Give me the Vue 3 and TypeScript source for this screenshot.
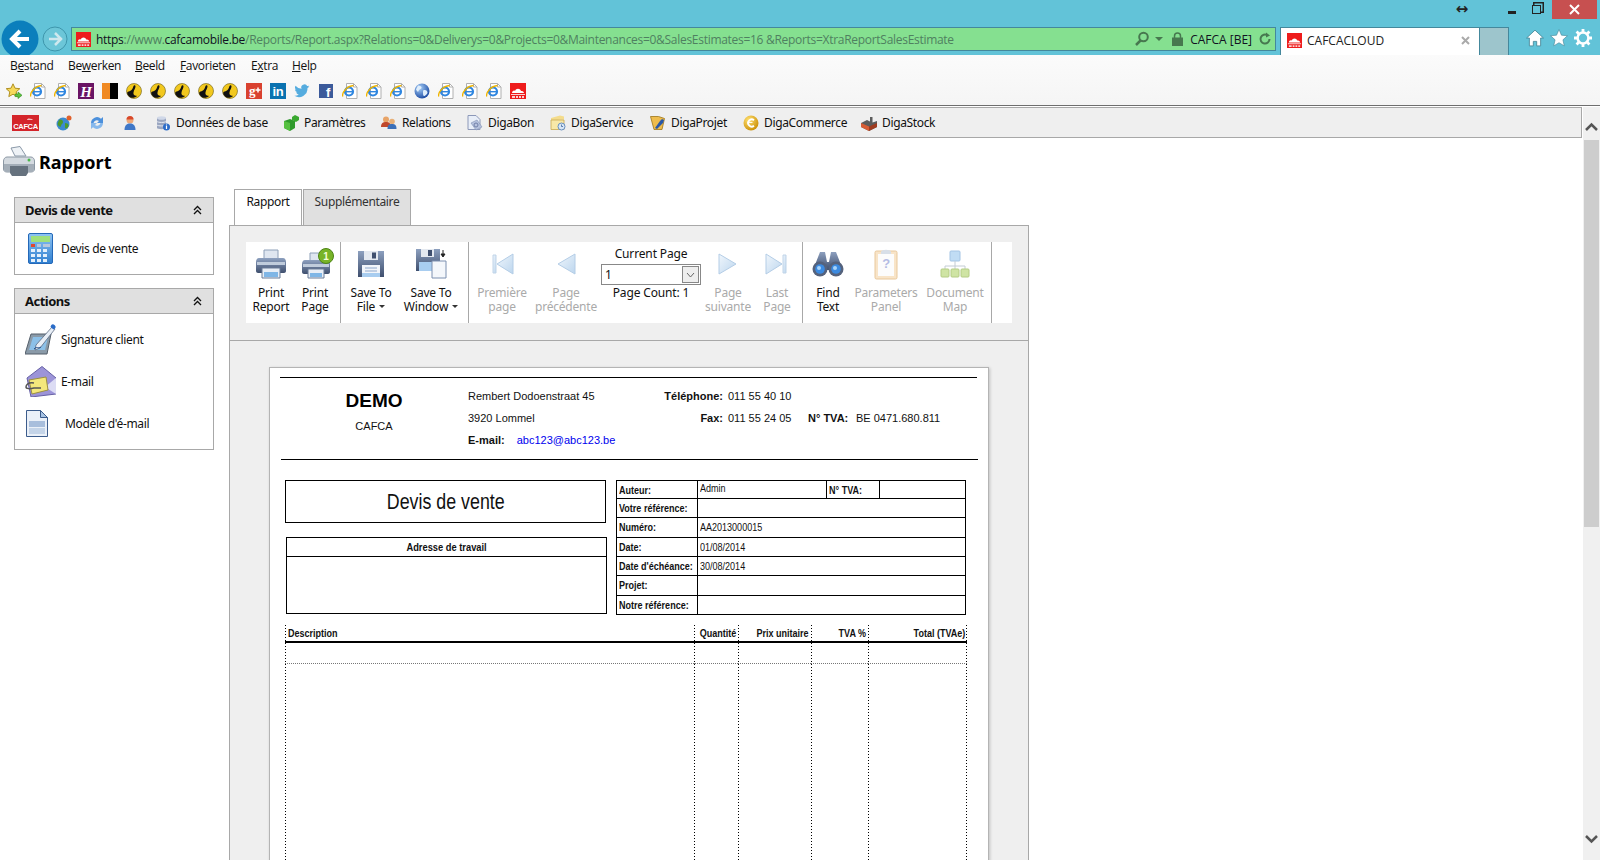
<script setup lang="ts">
// IE11 window with the Cafca report viewer inside it.
interface MenuItem { a: string; u: string; b: string; w: number }
interface NavItem { icon: string; label: string; w: number }
interface ToolButton { icon: string; lines: string[]; w: number; off?: boolean; caret?: boolean }
interface Glyph { t: string; x: number; y: number; size: number; family: string; color?: string; italic?: boolean }

const menus: MenuItem[] = [
  { a: "B", u: "e", b: "stand", w: 58 },
  { a: "Be", u: "w", b: "erken", w: 67 },
  { a: "", u: "B", b: "eeld", w: 45 },
  { a: "", u: "F", b: "avorieten", w: 71 },
  { a: "E", u: "x", b: "tra", w: 41 },
  { a: "", u: "H", b: "elp", w: 40 },
];

const favs = [
  "fav-star", "fav-ie", "fav-ie", "fav-h", "fav-flag", "fav-tt", "fav-tt", "fav-tt", "fav-tt", "fav-tt",
  "fav-gp", "fav-in", "fav-tw", "fav-fb", "fav-ie", "fav-ie", "fav-ie", "fav-globe", "fav-ie", "fav-ie",
  "fav-ie", "fav-cafca",
];

// letters on top of an icon stay real text, so they sit at the use site and not in the sprite
const glyphs: Record<string, Glyph> = {
  "fav-h": { t: "H", x: 8, y: 13.5, size: 15, family: "Liberation Serif", italic: true },
  "fav-gp": { t: "g", x: 6, y: 12, size: 13, family: "Liberation Serif" },
  "fav-in": { t: "in", x: 8, y: 13, size: 13, family: "Liberation Sans" },
  "fav-fb": { t: "f", x: 10, y: 14, size: 13, family: "Liberation Sans" },
  "bg-printone": { t: "1", x: 24, y: 11.5, size: 10, family: "Liberation Sans", color: "#f4ffd8" },
  "bg-param": { t: "?", x: 16, y: 20, size: 13, family: "Liberation Sans", color: "#b4bce4" },
};

const navItems: NavItem[] = [
  { icon: "nav-db", label: "Données de base", w: 128 },
  { icon: "nav-cube", label: "Paramètres", w: 98 },
  { icon: "nav-people", label: "Relations", w: 86 },
  { icon: "nav-doc", label: "DigaBon", w: 83 },
  { icon: "nav-folder", label: "DigaService", w: 100 },
  { icon: "nav-proj", label: "DigaProjet", w: 93 },
  { icon: "nav-coin", label: "DigaCommerce", w: 118 },
  { icon: "nav-stock", label: "DigaStock", w: 90 },
];

const groupA: ToolButton[] = [
  { icon: "bg-print", lines: ["Print", "Report"], w: 46 },
  { icon: "bg-printone", lines: ["Print", "Page"], w: 42 },
];
const groupB: ToolButton[] = [
  { icon: "bg-save", lines: ["Save To", "File"], w: 60, caret: true },
  { icon: "bg-savewin", lines: ["Save To", "Window"], w: 60, caret: true },
];
const groupC1: ToolButton[] = [
  { icon: "bg-first", lines: ["Première", "page"], w: 66, off: true },
  { icon: "bg-prev", lines: ["Page", "précédente"], w: 62, off: true },
];
const groupC2: ToolButton[] = [
  { icon: "bg-next", lines: ["Page", "suivante"], w: 46, off: true },
  { icon: "bg-last", lines: ["Last", "Page"], w: 52, off: true },
];
const groupD: ToolButton[] = [
  { icon: "bg-find", lines: ["Find", "Text"], w: 50 },
  { icon: "bg-param", lines: ["Parameters", "Panel"], w: 66, off: true },
  { icon: "bg-map", lines: ["Document", "Map"], w: 72, off: true },
];

const metaRows = [
  { label: "Votre référence:", value: "" },
  { label: "Numéro:", value: "AA2013000015" },
  { label: "Date:", value: "01/08/2014" },
  { label: "Date d'échéance:", value: "30/08/2014" },
  { label: "Projet:", value: "" },
  { label: "Notre référence:", value: "" },
];

const lineHead = ["Description", "Quantité", "Prix unitaire", "TVA %", "Total (TVAe)"];
</script>

<template>
  <div class="window">
    <!-- icon sprite, referenced through <use> below -->
    <svg class="sprite" width="0" height="0" aria-hidden="true">
      <defs>
        <linearGradient id="g-blue" x1="0" y1="0" x2="0" y2="1"><stop offset="0" stop-color="#8fc4f2" /><stop offset="1" stop-color="#2f7fd0" /></linearGradient>
        <linearGradient id="g-steel" x1="0" y1="0" x2="0" y2="1"><stop offset="0" stop-color="#8da0bf" /><stop offset="1" stop-color="#3f4f6e" /></linearGradient>
        <linearGradient id="g-pale" x1="0" y1="0" x2="1" y2="1"><stop offset="0" stop-color="#f0f6fc" /><stop offset="1" stop-color="#bcd6ee" /></linearGradient>
        <radialGradient id="g-globe" cx=".35" cy=".3" r=".8"><stop offset="0" stop-color="#a8d0f8" /><stop offset="1" stop-color="#0f3f9c" /></radialGradient>
        <radialGradient id="g-gold" cx=".35" cy=".3" r=".8"><stop offset="0" stop-color="#ffe070" /><stop offset="1" stop-color="#c88a00" /></radialGradient>
      </defs>

      <symbol id="fav-cafca" viewBox="0 0 16 16">
        <rect width="16" height="16" fill="#ee1c1c" />
        <path d="M2 10c0-2 2-3 3-2 1-3 5-3 6 0 2-.5 3 1 3 2z" fill="#fff" />
        <path d="M1 11h14v1H1zM2 13h3v2H2zM6 13h2v2H6zM9 13h2v2H9zM12 13h2v2h-2z" fill="#fff" opacity=".8" />
      </symbol>
      <symbol id="fav-ie" viewBox="0 0 16 16">
        <path d="M4.500 .5h7l3.500 3.500v11.500h-10.500z" fill="#fff" stroke="#b0b0b0" />
        <path d="M11.500 .5v3.500h3.500" fill="none" stroke="#b0b0b0" />
        <circle cx="7" cy="8.500" r="4" fill="none" stroke="#2f86e0" stroke-width="2.200" />
        <path d="M4 8.700h6.500" stroke="#2f86e0" stroke-width="1.400" />
        <path d="M.8 13.500C-.4 9.500 5 3 11.500 2.500" fill="none" stroke="#efb400" stroke-width="1.300" />
      </symbol>
      <symbol id="fav-star" viewBox="0 0 16 16">
        <path d="M7 .8l2 4.400 4.800.5-3.600 3.200 1 4.700L7 11.200l-4.200 2.400 1-4.700L.2 5.700 5 5.200z" fill="#f6d95a" stroke="#b09020" />
        <path d="M9 11h3V9l4 3.300-4 3.300v-2H9z" fill="#5cc03c" stroke="#2f8a20" stroke-width=".6" />
      </symbol>
      <symbol id="fav-h" viewBox="0 0 16 16"><rect width="16" height="16" fill="#6a1464" /></symbol>
      <symbol id="fav-flag" viewBox="0 0 16 16">
        <rect width="8" height="16" fill="#f08a24" /><rect x="8" width="8" height="16" fill="#000" />
      </symbol>
      <symbol id="fav-tt" viewBox="0 0 16 16">
        <circle cx="8" cy="8" r="7.500" fill="#f2c81e" stroke="#6a5a10" stroke-width=".6" />
        <path d="M1.500 9c3-1 5-2 6-6 .5-1 2-1 2 .5 0 2-1.500 3-2 6s2 3 3.500 3.500c-2 2-6 2.500-8 .5S1 10 1.500 9z" fill="#111" />
      </symbol>
      <symbol id="fav-gp" viewBox="0 0 16 16">
        <rect width="16" height="16" fill="#d9412f" />
        <path d="M12 4.500v5M9.500 7h5" stroke="#fff" stroke-width="1.500" />
      </symbol>
      <symbol id="fav-in" viewBox="0 0 16 16"><rect width="16" height="16" fill="#0a72b0" /></symbol>
      <symbol id="fav-tw" viewBox="0 0 16 16">
        <path d="M15.500 3.600c-.5.2-1.100.4-1.700.4.600-.4 1.100-.9 1.300-1.600-.6.3-1.200.6-1.900.7A3 3 0 0 0 7.600 5.800 8.500 8.500 0 0 1 1.500 2.700a3 3 0 0 0 .9 4c-.5 0-1-.1-1.400-.4 0 1.500 1 2.700 2.400 3-.4.1-.9.1-1.400 0 .4 1.200 1.500 2.100 2.800 2.100A6 6 0 0 1 .4 12.700 8.500 8.500 0 0 0 13.500 5.100c.8-.4 1.500-.9 2-1.500z" fill="#55acdf" />
      </symbol>
      <symbol id="fav-fb" viewBox="0 0 16 16"><rect x="1" y="1" width="14" height="14" fill="#3b5a9a" /></symbol>
      <symbol id="fav-globe" viewBox="0 0 16 16">
        <circle cx="8" cy="8" r="7.500" fill="url(#g-globe)" />
        <path d="M4 2.500c2 0 4 1 3.500 2.500S5 6 4.500 8 3 8 2 6.500zM10 7c2-.5 3.500 1 3.500 2.500S11 13 10 13s-1-3-1-4 0-2 1-2z" fill="#dfeefc" />
      </symbol>

      <symbol id="nav-logo" viewBox="0 0 27 16">
        <rect width="27" height="16" fill="#d4242a" />
        <path d="M15 5c0-1 1-1.500 2-1.500S19 4 20 4s1 1 0 1z" fill="#fff" opacity=".7" />
      </symbol>
      <symbol id="nav-globe" viewBox="0 0 16 16">
        <circle cx="7" cy="9" r="6.500" fill="#3c8ad0" />
        <path d="M3 5c2-1 4 0 4 2s-2 2-2 4-3 0-3.500-2zM9 8c2 0 4 1 3.500 3S10 14 9 13z" fill="#4c9a2c" />
        <circle cx="13" cy="3" r="2.500" fill="#e0602c" />
      </symbol>
      <symbol id="nav-refresh" viewBox="0 0 16 16">
        <path d="M2 8a6 6 0 0 1 10-4.300L14 2v6H8l2-2a3.500 3.500 0 0 0-5.500 2z" fill="#4c90dc" />
        <path d="M14 8a6 6 0 0 1-10 4.300L2 14V8h6l-2 2a3.500 3.500 0 0 0 5.500-2z" fill="#86b8ec" />
      </symbol>
      <symbol id="nav-user" viewBox="0 0 16 16">
        <circle cx="8" cy="5" r="3.500" fill="#eea878" />
        <path d="M4.500 4.500a3.500 3.500 0 0 1 7 0z" fill="#d8482a" />
        <path d="M2.500 15c0-5 2.500-6.500 5.500-6.500s5.500 1.500 5.500 6.500z" fill="#3f78c8" />
      </symbol>
      <symbol id="nav-db" viewBox="0 0 16 16">
        <path d="M2 3v10c0 1.500 9 1.500 9 0V3z" fill="#9aa6c0" />
        <ellipse cx="6.500" cy="3" rx="4.500" ry="1.800" fill="#d0d8e8" />
        <path d="M2 6.500c1 1.200 8 1.200 9 0M2 10c1 1.200 8 1.200 9 0" fill="none" stroke="#e8ecf4" />
        <circle cx="11.500" cy="12" r="3.500" fill="#2c6cc8" />
        <path d="M11.500 11v3M11.500 9.500v1" stroke="#fff" stroke-width="1.200" />
      </symbol>
      <symbol id="nav-cube" viewBox="0 0 16 16">
        <path d="M1 6l6-2 5 2v7l-5 3-6-3z" fill="#2f9a2c" />
        <path d="M1 6l6 2v8l-6-3z" fill="#56c040" />
        <path d="M9 2l3-2 4 2v3l-3 2-4-2z" fill="#3aa830" />
      </symbol>
      <symbol id="nav-people" viewBox="0 0 16 16">
        <circle cx="5" cy="4.500" r="3" fill="#e8a468" />
        <path d="M0 12c0-4 2-5 5-5s5 1 5 5z" fill="#c0482c" />
        <circle cx="11" cy="6.500" r="2.800" fill="#e8b078" />
        <path d="M6.500 14c0-4 1.500-5 4.500-5s4.500 1 4.500 5z" fill="#3c70b8" />
      </symbol>
      <symbol id="nav-doc" viewBox="0 0 16 16">
        <path d="M1 .5h8l4 4v10H1z" fill="#e8eef8" stroke="#8c98b8" />
        <path d="M4 8l6-3 5 7-6 3z" fill="#b6c2de" stroke="#8090b4" stroke-width=".6" />
        <circle cx="9" cy="10" r="2" fill="none" stroke="#7080a8" />
      </symbol>
      <symbol id="nav-folder" viewBox="0 0 16 16">
        <path d="M1 3l9-2.500 4 1v3l-13 1z" fill="#f4dc8c" />
        <path d="M1 5h13v9.500H1z" fill="#f8e8a8" stroke="#c8a850" stroke-width=".8" />
        <circle cx="11.500" cy="11.500" r="3.500" fill="#d8e6f6" stroke="#6890c0" />
        <path d="M11.500 9.500v2h1.500" fill="none" stroke="#40689c" stroke-width=".8" />
      </symbol>
      <symbol id="nav-proj" viewBox="0 0 16 16">
        <path d="M.5 1.500h8l6 2-2.500 11H4z" fill="#eebc4c" stroke="#9c7418" stroke-width=".8" />
        <path d="M5 13l5-7 2-2 2 1-1 3-6 6z" fill="#2858a8" />
      </symbol>
      <symbol id="nav-coin" viewBox="0 0 16 16">
        <circle cx="8" cy="8" r="7.500" fill="url(#g-gold)" />
        <path d="M11 5.200A3.600 3.600 0 1 0 11 10.800" fill="none" stroke="#fff" stroke-width="1.800" />
        <path d="M4.500 7.400h5" stroke="#fff" stroke-width="1" />
      </symbol>
      <symbol id="nav-stock" viewBox="0 0 16 16">
        <path d="M0 8l6-3 3 1.500V2h2.500v5.500L16 6v6l-8 4-8-4z" fill="#5c5c5c" />
        <path d="M0 8l8 3.500V16l-8-4z" fill="#d85c34" />
        <path d="M8 11.500L16 8v4l-8 4z" fill="#a03c20" />
      </symbol>

      <symbol id="nav-printer" viewBox="0 0 32 32">
        <path d="M8 2l9-1.500 6 9.500H12z" fill="#eef2f6" stroke="#8a98a8" />
        <path d="M4 11h24c2 0 3.500 2 3.500 4v8c0 2-1.500 3-3.500 3H4c-2 0-3.500-1-3.500-3v-8c0-2 1.500-4 3.500-4z" fill="#d4dae0" stroke="#8c98a4" />
        <path d="M1 18h30v5c0 2-1 3-3 3H4c-2 0-3-1-3-3z" fill="#a4aeb8" />
        <path d="M7 20h18v7l-2 3H9l-2-3z" fill="#66727e" />
        <circle cx="26" cy="14" r="1.500" fill="#48b848" />
      </symbol>
      <symbol id="side-calc" viewBox="0 0 25 31">
        <rect x=".5" y=".5" width="24" height="30" rx="1.500" fill="url(#g-blue)" stroke="#2468b8" />
        <rect x="3" y="3" width="19" height="6" fill="#9fe07c" />
        <rect x="3" y="11" width="4" height="3" fill="#e04830" /><rect x="9" y="11" width="4" height="3" fill="#b8c8dc" /><rect x="15" y="11" width="7" height="3" fill="#b8c8dc" />
        <path d="M3 16h4v3H3zM9 16h4v3H9zM15 16h4v3h-4zM3 21h4v3H3zM9 21h4v3H9zM15 21h4v3h-4zM3 26h4v3H3zM9 26h4v3H9zM15 26h4v3h-4z" fill="#e4f0fb" />
      </symbol>
      <symbol id="side-sign" viewBox="0 0 31 31">
        <path d="M6 10h20l-4 20H0z" fill="#8a9aa8" stroke="#555f6a" />
        <path d="M8 13h15l-3 13H4z" fill="#8cc0e8" />
        <path d="M11 21L27 3l3 2-15 19-5 2z" fill="#e8eef6" stroke="#5a6a80" stroke-width=".8" />
        <path d="M26 1.500a2.500 2.500 0 0 1 4 3l-1.500 1-3-2.500z" fill="#2a6cc8" />
        <path d="M9 25c3-3 4 0 7-2" fill="none" stroke="#24508c" />
      </symbol>
      <symbol id="side-mail" viewBox="0 0 31 31">
        <path d="M2 12L17 .5 31 12v16L6 31z" fill="#9c94d8" stroke="#6660a4" />
        <path d="M31 12L20 21l11 7z" fill="#dcdcf4" />
        <path d="M4 14l17-3 2 13-16 4z" fill="#f4e87c" stroke="#9c9040" />
        <path d="M9 17c-6-1-8 2-8 4s4 2 8 1h7" fill="none" stroke="#555" stroke-width="1.500" />
      </symbol>
      <symbol id="side-page" viewBox="0 0 22 27">
        <path d="M.5.500h14l7 7v19H.5z" fill="#eaf0f8" stroke="#3c5c8c" />
        <path d="M14.500.500v7h7z" fill="#a8c4e4" stroke="#3c5c8c" />
        <path d="M3 11h16v6H3z" fill="#a8bedc" /><path d="M3 18h16v6H3z" fill="#c4d4e8" />
      </symbol>

      <symbol id="bg-print" viewBox="0 0 32 32">
        <path d="M9 2h14v9H9z" fill="#dfe6f0" stroke="#8ea0b8" />
        <path d="M4 10h24c2 0 3 2 3 4v9c0 1-1 2-2 2H3c-1 0-2-1-2-2v-9c0-2 1-4 3-4z" fill="url(#g-steel)" />
        <path d="M2 14h28v3H2z" fill="#c0ccdc" />
        <path d="M7 20h18v10H7z" fill="#e8eef6" stroke="#6a7c98" />
        <path d="M9 24h14v5H9z" fill="#7fb6e6" />
      </symbol>
      <symbol id="bg-printone" viewBox="0 0 32 32">
        <path d="M8 5h13v8H8z" fill="#dfe6f0" stroke="#8ea0b8" />
        <path d="M3 12h22c2 0 3 2 3 4v8c0 1-1 2-2 2H2c-1 0-2-1-2-2v-8c0-2 1-4 3-4z" fill="url(#g-steel)" />
        <path d="M1 16h26v3H1z" fill="#c0ccdc" />
        <path d="M6 21h16v9H6z" fill="#e8eef6" stroke="#6a7c98" />
        <path d="M8 25h12v4H8z" fill="#7fb6e6" />
        <circle cx="24" cy="8" r="7.500" fill="#78b428" stroke="#4c8414" />
      </symbol>
      <symbol id="bg-save" viewBox="0 0 32 32">
        <path d="M3 3h26v26H3z" fill="url(#g-steel)" />
        <path d="M9 3h14v9H9z" fill="#e4e9f0" /><path d="M17 4.500h4v6h-4z" fill="#3f4f6e" />
        <path d="M7 17h18v12H7z" fill="#f2f5fa" />
        <path d="M10 20h12M10 23h12" stroke="#8ea8cc" />
        <path d="M7 25h18v4H7z" fill="#a8cdf0" />
      </symbol>
      <symbol id="bg-savewin" viewBox="0 0 32 32">
        <path d="M1 1h24v22H1z" fill="url(#g-steel)" />
        <path d="M6 1h13v8H6z" fill="#e4e9f0" /><path d="M13 2h4v6h-4z" fill="#3f4f6e" />
        <path d="M4 14h14v9H4z" fill="#a8cdf0" />
        <path d="M17 13h14v17H17z" fill="#f4f7fb" stroke="#7c90b0" />
        <path d="M28 2v6M26 6l2 3 2-3z" stroke="#222" fill="#222" />
      </symbol>
      <symbol id="bg-first" viewBox="0 0 32 32"><path d="M7 7h3v18H7z" fill="url(#g-pale)" stroke="#c0d4e8" /><path d="M27 6v20L11 16z" fill="url(#g-pale)" stroke="#b4cde6" /></symbol>
      <symbol id="bg-prev" viewBox="0 0 32 32"><path d="M25 6v20L8 16z" fill="url(#g-pale)" stroke="#b4cde6" /></symbol>
      <symbol id="bg-next" viewBox="0 0 32 32"><path d="M7 6v20l17-10z" fill="url(#g-pale)" stroke="#b4cde6" /></symbol>
      <symbol id="bg-last" viewBox="0 0 32 32"><path d="M5 6v20l16-10z" fill="url(#g-pale)" stroke="#b4cde6" /><path d="M22 7h3v18h-3z" fill="url(#g-pale)" stroke="#c0d4e8" /></symbol>
      <symbol id="bg-find" viewBox="0 0 32 32">
        <path d="M8 4h5l2 10h2l2-10h5l7 18H1z" fill="url(#g-steel)" />
        <circle cx="8" cy="21" r="7.500" fill="#55627c" /><circle cx="24" cy="21" r="7.500" fill="#55627c" />
        <circle cx="8" cy="21" r="4.800" fill="#3c8ae0" /><circle cx="24" cy="21" r="4.800" fill="#3c8ae0" />
        <circle cx="7" cy="20" r="2" fill="#a8d4fa" /><circle cx="23" cy="20" r="2" fill="#a8d4fa" />
      </symbol>
      <symbol id="bg-param" viewBox="0 0 32 32">
        <rect x="5" y="3" width="22" height="28" rx="1.500" fill="#f8e4c8" stroke="#e8c89c" />
        <rect x="8" y="6" width="16" height="22" fill="#fcfcfc" />
        <path d="M11 4c0-3 10-3 10 0v2H11z" fill="#d8dfe8" />
      </symbol>
      <symbol id="bg-map" viewBox="0 0 32 32">
        <rect x="11" y="3" width="10" height="10" rx="1" fill="#c0dcf4" stroke="#a4c4e4" />
        <path d="M16 13v5M6 22v-4h20v4M16 18v4" fill="none" stroke="#c4ccd4" />
        <rect x="2" y="21" width="8" height="8" rx="1" fill="#cfe4a4" stroke="#b4cc84" />
        <rect x="12" y="21" width="8" height="8" rx="1" fill="#cfe4a4" stroke="#b4cc84" />
        <rect x="22" y="21" width="8" height="8" rx="1" fill="#cfe4a4" stroke="#b4cc84" />
      </symbol>
    </svg>

    <header class="chrome">
      <div class="win-row">
        <span class="resize">↔</span>
        <button class="win-btn"><span class="win-min" /></button>
        <button class="win-btn"><span class="win-restore" /></button>
        <button class="win-close">
          <svg width="11" height="11" viewBox="0 0 11 11"><path d="M1 1l9 9M10 1l-9 9" stroke="#fff" stroke-width="2" /></svg>
        </button>
      </div>
      <div class="nav-row">
        <svg class="back" width="38" height="38" viewBox="0 0 38 38">
          <circle cx="19" cy="19" r="18.500" fill="#0b7fbc" />
          <path d="M28 19H12M19 11l-8 8 8 8" fill="none" stroke="#fff" stroke-width="4" />
        </svg>
        <svg class="forward" width="26" height="26" viewBox="0 0 26 26">
          <circle cx="13" cy="13" r="12" fill="#6cc6d8" stroke="#3e96ac" />
          <path d="M20 13H7M13 7l6 6-6 6" fill="none" stroke="#cfe8ee" stroke-width="2.500" />
        </svg>
        <div class="address">
          <svg class="addr-fav" width="15" height="15"><use href="#fav-cafca" /></svg>
          <span class="url"><b>https</b>://www.<b>cafcamobile.be</b>/Reports/Report.aspx?Relations=0&amp;Deliverys=0&amp;Projects=0&amp;Maintenances=0&amp;SalesEstimates=16 &amp;Reports=XtraReportSalesEstimate</span>
          <svg width="16" height="16" viewBox="0 0 16 16"><circle cx="9.500" cy="6" r="4.300" fill="none" stroke="#47784f" stroke-width="2" /><path d="M6.500 9.500L2 14" stroke="#47784f" stroke-width="2.500" /></svg>
          <span class="addr-caret" />
          <svg class="addr-lock" width="11" height="14" viewBox="0 0 11 14"><path d="M2.500 6V4a3 3 0 0 1 6 0v2" fill="none" stroke="#47784f" stroke-width="1.500" /><rect y="5.500" width="11" height="8.500" fill="#47784f" /></svg>
          <span class="cert">CAFCA [BE]</span>
          <svg class="addr-reload" width="14" height="14" viewBox="0 0 14 14"><path d="M11.500 7a4.500 4.500 0 1 1-2-3.700" fill="none" stroke="#47784f" stroke-width="2" /><path d="M8 .5l4 3-4 2z" fill="#47784f" /></svg>
        </div>
        <div class="tab">
          <svg width="15" height="15"><use href="#fav-cafca" /></svg>
          <span class="tab-title">CAFCACLOUD</span>
          <svg width="9" height="9" viewBox="0 0 9 9"><path d="M1 1l7 7M8 1L1 8" stroke="#aaa" stroke-width="2" /></svg>
        </div>
        <div class="new-tab" />
        <div class="chrome-icons">
          <svg width="18" height="18" viewBox="0 0 16 16"><path d="M8 1L.5 8H3v7h3.500v-4h3v4H13V8h2.500z" fill="#fff" stroke="#3d7f90" stroke-width=".7" /></svg>
          <svg width="18" height="18" viewBox="0 0 16 16"><path d="M8 .5l2.200 5 5.300.5-4 3.600 1.200 5.400L8 12.200 3.300 15l1.200-5.400-4-3.600 5.300-.5z" fill="#fff" stroke="#3d7f90" stroke-width=".5" /></svg>
          <svg width="18" height="18" viewBox="0 0 16 16"><circle cx="8" cy="8" r="4.800" fill="none" stroke="#fff" stroke-width="2.200" /><path d="M8 0v3M8 13v3M0 8h3M13 8h3M2.300 2.300l2.100 2.100M11.600 11.600l2.100 2.100M13.700 2.300l-2.100 2.100M4.400 11.600l-2.100 2.100" stroke="#fff" stroke-width="2.500" /></svg>
        </div>
      </div>
    </header>

    <div class="menu-area">
      <nav class="menu">
        <span v-for="m in menus" :key="m.b" class="menu-item" :style="{ width: m.w + 'px' }">{{ m.a }}<u>{{ m.u }}</u>{{ m.b }}</span>
      </nav>
      <div class="favs">
        <svg v-for="(f, i) in favs" :key="i" width="16" height="16" viewBox="0 0 16 16">
          <use :href="'#' + f" width="16" height="16" />
          <text
            v-if="glyphs[f]"
            :x="glyphs[f].x"
            :y="glyphs[f].y"
            text-anchor="middle"
            font-weight="700"
            fill="#fff"
            :font-family="glyphs[f].family"
            :font-size="glyphs[f].size"
            :font-style="glyphs[f].italic ? 'italic' : 'normal'"
          >{{ glyphs[f].t }}</text>
        </svg>
      </div>
    </div>

    <div class="site">
      <div class="viewport">
        <div class="app-bar">
          <svg class="logo" width="27" height="16" viewBox="0 0 27 16">
            <use href="#nav-logo" width="27" height="16" />
            <text x="13.500" y="13.500" text-anchor="middle" font-family="Liberation Sans" font-size="7.500" font-weight="700" fill="#fff">CAFCA</text>
          </svg>
          <svg class="bar-i first" width="16" height="16"><use href="#nav-globe" /></svg>
          <svg class="bar-i" width="16" height="16"><use href="#nav-refresh" /></svg>
          <svg class="bar-i" width="16" height="16"><use href="#nav-user" /></svg>
          <span v-for="n in navItems" :key="n.label" class="bar-item" :style="{ width: n.w + 'px' }">
            <svg width="16" height="16"><use :href="'#' + n.icon" /></svg>
            {{ n.label }}
          </span>
        </div>

        <div class="page-title">
          <svg width="32" height="32"><use href="#nav-printer" /></svg>
          <h1>Rapport</h1>
        </div>

        <div class="content">
          <aside class="sidebar">
            <section class="side-panel">
              <h2>Devis de vente
                <svg width="9" height="10" viewBox="0 0 9 10"><path d="M1 5l3.500-3.500L8 5M1 9l3.500-3.500L8 9" fill="none" stroke="#111" stroke-width="1.300" /></svg>
              </h2>
              <div class="side-body one">
                <div class="side-row">
                  <svg class="calc" width="25" height="31"><use href="#side-calc" /></svg>
                  <span>Devis de vente</span>
                </div>
              </div>
            </section>
            <section class="side-panel">
              <h2>Actions
                <svg width="9" height="10" viewBox="0 0 9 10"><path d="M1 5l3.500-3.500L8 5M1 9l3.500-3.500L8 9" fill="none" stroke="#111" stroke-width="1.300" /></svg>
              </h2>
              <div class="side-body">
                <div class="side-row">
                  <svg class="act" width="31" height="31"><use href="#side-sign" /></svg>
                  <span>Signature client</span>
                </div>
                <div class="side-row">
                  <svg class="act" width="31" height="31"><use href="#side-mail" /></svg>
                  <span>E-mail</span>
                </div>
                <div class="side-row">
                  <svg class="pg" width="22" height="27"><use href="#side-page" /></svg>
                  <span>Modèle d'é-mail</span>
                </div>
              </div>
            </section>
          </aside>

          <main class="main">
            <div class="tabs">
              <div class="r-tab active">Rapport</div>
              <div class="r-tab other">Supplémentaire</div>
            </div>
            <div class="tool-panel">
              <div class="ribbon">
                <div class="group g1">
                  <div v-for="b in groupA" :key="b.icon" class="tool" :style="{ width: b.w + 'px' }">
                    <svg width="32" height="32" viewBox="0 0 32 32">
                      <use :href="'#' + b.icon" width="32" height="32" />
                      <text v-if="glyphs[b.icon]" :x="glyphs[b.icon].x" :y="glyphs[b.icon].y" text-anchor="middle" font-weight="700" :fill="glyphs[b.icon].color" :font-family="glyphs[b.icon].family" :font-size="glyphs[b.icon].size">{{ glyphs[b.icon].t }}</text>
                    </svg>
                    <span v-for="l in b.lines" :key="l">{{ l }}</span>
                  </div>
                </div>
                <div class="group g2">
                  <div v-for="b in groupB" :key="b.icon" class="tool" :style="{ width: b.w + 'px' }">
                    <svg width="32" height="32"><use :href="'#' + b.icon" /></svg>
                    <span>{{ b.lines[0] }}</span>
                    <span>{{ b.lines[1] }}<i class="caret" /></span>
                  </div>
                </div>
                <div class="group g3">
                  <div v-for="b in groupC1" :key="b.icon" class="tool off" :style="{ width: b.w + 'px' }">
                    <svg width="32" height="32"><use :href="'#' + b.icon" /></svg>
                    <span v-for="l in b.lines" :key="l">{{ l }}</span>
                  </div>
                  <div class="pager">
                    <span class="pager-label">Current Page</span>
                    <div class="combo">
                      <span>1</span>
                      <span class="combo-btn">
                        <svg width="9" height="6" viewBox="0 0 9 6"><path d="M1 1l3.500 4L8 1" fill="none" stroke="#666" /></svg>
                      </span>
                    </div>
                    <span class="pager-count">Page Count: 1</span>
                  </div>
                  <div v-for="b in groupC2" :key="b.icon" class="tool off" :style="{ width: b.w + 'px' }">
                    <svg width="32" height="32"><use :href="'#' + b.icon" /></svg>
                    <span v-for="l in b.lines" :key="l">{{ l }}</span>
                  </div>
                </div>
                <div class="group g4">
                  <div v-for="b in groupD" :key="b.icon" class="tool" :class="{ off: b.off }" :style="{ width: b.w + 'px' }">
                    <svg width="32" height="32" viewBox="0 0 32 32">
                      <use :href="'#' + b.icon" width="32" height="32" />
                      <text v-if="glyphs[b.icon]" :x="glyphs[b.icon].x" :y="glyphs[b.icon].y" text-anchor="middle" font-weight="700" :fill="glyphs[b.icon].color" :font-family="glyphs[b.icon].family" :font-size="glyphs[b.icon].size">{{ glyphs[b.icon].t }}</text>
                    </svg>
                    <span v-for="l in b.lines" :key="l">{{ l }}</span>
                  </div>
                </div>
              </div>
            </div>

            <div class="doc-panel">
              <article class="sheet">
                <div class="rule top" />
                <div class="letterhead">
                  <div class="company">
                    <strong>DEMO</strong>
                    <span>CAFCA</span>
                  </div>
                  <div class="addr">Rembert Dodoenstraat 45</div>
                  <b class="lbl">Téléphone:</b>
                  <div class="val">011 55 40 10</div>
                  <div />
                  <div />
                  <div class="addr">3920 Lommel</div>
                  <b class="lbl">Fax:</b>
                  <div class="val">011 55 24 05</div>
                  <b>N° TVA:</b>
                  <div>BE 0471.680.811</div>
                  <div class="addr"><b>E-mail:</b><a class="mail">abc123@abc123.be</a></div>
                </div>
                <div class="rule bottom" />

                <div class="blocks">
                  <div class="blocks-left">
                    <div class="doc-title"><span class="squeeze">Devis de vente</span></div>
                    <div class="work">
                      <div class="work-head"><span class="squeeze">Adresse de travail</span></div>
                      <div class="work-body" />
                    </div>
                  </div>
                  <div class="meta">
                    <div class="meta-row first">
                      <b><span class="nar">Auteur:</span></b>
                      <span class="up"><span class="nar">Admin</span></span>
                      <b class="vat"><span class="nar">N° TVA:</span></b>
                      <span class="vat-val" />
                    </div>
                    <div v-for="r in metaRows" :key="r.label" class="meta-row">
                      <b><span class="nar">{{ r.label }}</span></b>
                      <span class="meta-val"><span class="nar">{{ r.value }}</span></span>
                    </div>
                  </div>
                </div>

                <div class="lines">
                  <div v-for="(h, i) in lineHead" :key="h" class="cell head" :class="{ left: i === 0 }"><span class="nar">{{ h }}</span></div>
                  <div v-for="h in lineHead" :key="h + 'row'" class="cell item" />
                  <div v-for="h in lineHead" :key="h + 'fill'" class="cell fill" />
                </div>
              </article>
            </div>
          </main>
        </div>
      </div>

      <div class="scrollbar">
        <svg class="sb-arrow" width="15" height="10" viewBox="0 0 15 10"><path d="M2 8l5.500-5.500L13 8" fill="none" stroke="#555" stroke-width="2.500" /></svg>
        <div class="sb-thumb" />
        <svg class="sb-arrow down" width="15" height="10" viewBox="0 0 15 10"><path d="M2 2l5.500 5.500L13 2" fill="none" stroke="#555" stroke-width="2.500" /></svg>
      </div>
    </div>
  </div>
</template>

<style>
html, body { margin: 0; background: #fff; overflow: hidden; }
</style>

<style scoped>
.window {
  width: 1600px;
  height: 860px;
  display: flex;
  flex-direction: column;
  overflow: hidden;
  background: #fff;
  font-family: "Noto Sans", "Open Sans", sans-serif;
  font-size: 12px;
  letter-spacing: -0.35px;
  color: #111;
}
.sprite { position: absolute; }

/* ─── Browser chrome ─────────────────────────────── */
.chrome {
  flex: 0 0 55px;
  height: 55px;
  background: #62c3d8;
  overflow: hidden;
}
.win-row {
  height: 27px;
  display: flex;
  align-items: flex-start;
  justify-content: flex-end;
  padding-right: 3px;
}
.resize { font: 700 15px/18px "DejaVu Sans", sans-serif; margin-right: 31px; color: #222; }
.win-btn {
  width: 26px;
  height: 19px;
  padding: 0;
  border: 0;
  background: none;
  display: flex;
  align-items: center;
  justify-content: center;
}
.win-min { width: 8px; height: 3px; background: #222; margin-top: 5px; }
.win-restore { width: 7px; height: 7px; margin-right: 4px; border: 1.500px solid #222; box-shadow: 2px -2px 0 -0.500px #62c3d8, 2px -2px 0 1px #222; }
.win-close {
  width: 45px;
  height: 19px;
  margin-left: 1px;
  border: 0;
  padding: 0;
  background: #c75050;
  display: flex;
  align-items: center;
  justify-content: center;
}
.nav-row { height: 28px; display: flex; align-items: flex-start; }
.back { margin: -7px 0 0 1px; flex: none; }
.forward { margin: -1px 0 0 3px; flex: none; }
.address {
  margin-left: 3px;
  width: 1205px;
  height: 24px;
  box-sizing: border-box;
  border: 1px solid #44889c;
  background: #85e090;
  display: flex;
  align-items: center;
  padding: 0 3px 0 4px;
  font-family: "Open Sans", sans-serif;
  color: #4f8060;
  font-size: 12px;
}
.addr-fav { flex: none; }
.url { flex: 1; margin-left: 5px; white-space: pre; letter-spacing: -0.29px; }
.url b { font-weight: 400; color: #112; }
.addr-caret { width: 0; height: 0; border: 4px solid transparent; border-top-color: #47784f; border-bottom: 0; margin: 0 9px 0 5px; }
.addr-lock { flex: none; }
.cert { color: #112; margin-left: 7px; letter-spacing: 0; }
.addr-reload { margin-left: 6px; }
.tab {
  margin-left: 4px;
  width: 200px;
  height: 28px;
  box-sizing: border-box;
  border: 1px solid #44889c;
  border-bottom: 0;
  background: #fff;
  display: flex;
  align-items: center;
  padding: 0 9px 2px 6px;
  font-family: "Open Sans", sans-serif;
  font-size: 12px;
  letter-spacing: 0;
}
.tab-title { flex: 1; margin-left: 5px; color: #222; }
.new-tab {
  width: 29px;
  height: 28px;
  box-sizing: border-box;
  background: #9dc5cc;
  border: 1px solid #44889c;
  border-width: 1px 1px 0 0;
}
.chrome-icons { display: flex; gap: 6px; margin: 2px 0 0 17px; }

/* ─── IE menu and favorites ──────────────────────── */
.menu-area {
  flex: 0 0 50px;
  background: linear-gradient(#fbfbfb, #f5f5f5);
  border-bottom: 1px solid #6e6e6e;
}
.menu { height: 21px; display: flex; align-items: center; padding: 0 0 0 10px; font-family: "Open Sans", sans-serif; letter-spacing: -0.35px; }
.menu-item { flex: none; }
.favs { display: flex; gap: 8px; padding: 7px 0 0 6px; }

/* ─── Site ───────────────────────────────────────── */
.site { flex: 1; min-height: 0; display: flex; padding-top: 1px; }
.viewport { width: 1583px; display: flex; flex-direction: column; min-height: 0; }
.app-bar {
  flex: none;
  width: 1582px;
  height: 31px;
  box-sizing: border-box;
  background: #efefef;
  border: 1px solid #a8a8a8;
  border-left: 0;
  display: flex;
  align-items: center;
  padding-left: 12px;
}
.logo { flex: none; }
.bar-i { flex: none; margin-left: 17px; }
.bar-item { flex: none; display: inline-flex; align-items: center; gap: 5px; white-space: nowrap; }
.bar-i + .bar-item { margin-left: 17px; }
.page-title { flex: none; height: 44px; display: flex; align-items: center; padding: 3px 0 0 3px; gap: 4px; box-sizing: border-box; }
.page-title h1 { margin: 0; font-size: 18px; font-weight: 700; color: #000; letter-spacing: 0; }
.content { flex: 1; min-height: 0; display: flex; padding-left: 14px; }

.sidebar { flex: 0 0 200px; padding-top: 15px; display: flex; flex-direction: column; gap: 13px; }
.side-panel { border: 1px solid #a8a8a8; box-sizing: border-box; width: 200px; }
.side-panel h2 {
  margin: 0;
  height: 25px;
  box-sizing: border-box;
  border-bottom: 1px solid #a8a8a8;
  background: #e0e0e0;
  display: flex;
  align-items: center;
  justify-content: space-between;
  padding: 0 11px 0 10px;
  font-size: 13px;
  font-weight: 700;
  letter-spacing: -0.5px;
}
.side-body { display: flex; flex-direction: column; padding: 4px 0 5px; }
.side-body.one { padding: 0; height: 51px; }
.side-row { height: 42px; display: flex; align-items: center; flex: none; }
.one .side-row { height: 51px; }
.calc { margin: 0 8px 0 13px; }
.act { margin: 0 5px 0 10px; flex: none; }
.pg { margin: 0 17px 0 11px; flex: none; }

.main { flex: 0 0 800px; margin-left: 15px; padding-top: 7px; display: flex; flex-direction: column; min-height: 0; }
.tabs { flex: none; height: 36px; display: flex; gap: 1px; padding-left: 5px; box-sizing: border-box; }
.r-tab {
  box-sizing: border-box;
  height: 36px;
  border: 1px solid #a8a8a8;
  border-bottom: 0;
  text-align: center;
  padding-top: 3px;
  line-height: 17px;
}
.r-tab.active { width: 68px; background: #fff; }
.r-tab.other { width: 108px; background: #e0e0e0; color: #333; }

.tool-panel {
  flex: none;
  height: 115px;
  box-sizing: border-box;
  border: 1px solid #a8a8a8;
  border-bottom: 0;
  background: #efefef;
  padding: 16px 15px 0 16px;
}
.ribbon { display: flex; height: 81px; background: #fff; width: 766px; }
.group { display: flex; box-sizing: border-box; height: 81px; border-right: 1px solid #a8a8a8; }
.g1 { width: 95px; padding-left: 2px; }
.g2 { width: 128px; }
.g3 { width: 334px; }
.g4 { width: 189px; }
.tool { flex: none; display: flex; flex-direction: column; align-items: center; padding-top: 6px; box-sizing: border-box; line-height: 14px; color: #111; letter-spacing: -0.2px; }
.tool svg { margin-bottom: 6px; flex: none; }
.tool span { white-space: nowrap; }
.tool.off { color: #aaa; }
.g1 .tool:nth-child(2) svg { transform: translateX(3px); }
.caret { display: inline-block; width: 0; height: 0; border: 3px solid transparent; border-top-color: #333; border-bottom: 0; margin: 0 0 2px 4px; vertical-align: middle; }
.pager { width: 108px; flex: none; display: flex; flex-direction: column; align-items: center; padding-top: 5px; box-sizing: border-box; letter-spacing: -0.15px; }
.pager-label { line-height: 14px; }
.combo {
  margin-top: 3px;
  width: 100px;
  height: 21px;
  box-sizing: border-box;
  border: 1px solid #888;
  background: #fff;
  display: flex;
  align-items: center;
  justify-content: space-between;
  padding: 0 1px 0 3px;
}
.combo-btn { width: 17px; height: 17px; box-sizing: border-box; border: 1px solid #888; background: #eee; display: flex; align-items: center; justify-content: center; }
.pager-count { margin-top: 1px; line-height: 14px; }

.doc-panel {
  flex: 1;
  min-height: 0;
  overflow: hidden;
  box-sizing: border-box;
  border: 1px solid #a8a8a8;
  border-bottom: 0;
  background: #efefef;
  padding: 26px 39px 0 39px;
}

/* ─── Report sheet ───────────────────────────────── */
.sheet {
  width: 720px;
  height: 900px;
  box-sizing: border-box;
  background: #fff;
  border: 1px solid #b4b4b4;
  box-shadow: 1px 1px 3px rgba(0, 0, 0, 0.2);
  padding: 9px 0 0 10px;
  font-family: "Liberation Sans", Arial, sans-serif;
  font-size: 11px;
  letter-spacing: 0;
  color: #111;
}
/* the report uses Arial Narrow, which has no installed equivalent */
.squeeze { display: inline-block; transform: scaleX(0.81); white-space: nowrap; }
.nar { display: inline-block; width: 122%; transform: scaleX(0.82); transform-origin: left center; white-space: nowrap; }
.rule { height: 1px; background: #000; }
.rule.top { width: 697px; }
.rule.bottom { width: 697px; margin-left: 1px; }
.letterhead {
  height: 81px;
  box-sizing: border-box;
  padding-top: 7px;
  display: grid;
  grid-template-columns: 188px 191px 64px 85px 48px 1fr;
  grid-auto-rows: 22px;
  align-items: center;
}
.company { grid-row: 1 / span 3; align-self: start; display: flex; flex-direction: column; align-items: center; padding-top: 4px; }
.company strong { font-size: 19px; line-height: 24px; color: #000; }
.company span { margin-top: 5px; line-height: 16px; }
.lbl { text-align: right; }
.val { padding-left: 5px; }
.mail { color: #0000ee; margin-left: 12px; }
.blocks { display: flex; padding: 20px 0 0 5px; }
.blocks-left { width: 321px; }
.doc-title {
  height: 43px;
  width: 321px;
  box-sizing: border-box;
  border: 1px solid #000;
  display: flex;
  align-items: center;
  justify-content: center;
  font-size: 22px;
}
.work { margin: 14px 0 0 1px; width: 321px; height: 77px; box-sizing: border-box; border: 1px solid #000; }
.work-head {
  height: 19px;
  box-sizing: border-box;
  border-bottom: 1px solid #000;
  text-align: center;
  font-size: 11.500px;
  font-weight: 700;
  line-height: 19px;
}
.meta {
  margin-left: 10px;
  width: 350px;
  height: 135px;
  box-sizing: border-box;
  border: 1px solid #000;
  display: flex;
  flex-direction: column;
  font-size: 11px;
}
.meta-row { flex: 1; display: flex; align-items: center; border-top: 1px solid #000; }
.meta-row.first { border-top: 0; flex: 0 0 17px; }
.meta-row > b { flex: 0 0 81px; min-width: 0; box-sizing: border-box; padding-left: 2px; height: 100%; display: flex; align-items: center; border-right: 1px solid #000; }
.meta-row > .meta-val { padding-left: 2px; flex: 1; min-width: 0; }
.meta-row.first .up { flex: 0 0 129px; box-sizing: border-box; height: 100%; display: flex; align-items: center; border-right: 1px solid #000; padding: 0 0 3px 2px; }
.meta-row.first .vat { flex: 0 0 53px; }
.nar { flex: none; }
.lines {
  margin: 10px 0 0 5px;
  width: 682px;
  display: grid;
  grid-template-columns: 409px 44px 73px 57px 99px;
  font-size: 11px;
  font-weight: 700;
}
.cell {
  box-sizing: border-box;
  background: repeating-linear-gradient(#000 0 1px, transparent 1px 3px) left top / 1px 100% no-repeat;
}
.cell:nth-child(5n) {
  background:
    repeating-linear-gradient(#000 0 1px, transparent 1px 3px) left top / 1px 100% no-repeat,
    repeating-linear-gradient(#000 0 1px, transparent 1px 3px) right top / 1px 100% no-repeat;
}
.head { height: 18px; border-bottom: 2px solid #000; padding: 0 2px 0 0; line-height: 17px; white-space: nowrap; text-align: right; }
.head .nar { margin-left: -22%; transform-origin: right center; }
.head.left { text-align: left; padding-left: 3px; }
.head.left .nar { margin-left: 0; transform-origin: left center; }
.item { height: 21px; border-bottom: 1px dotted #777; }
.fill { height: 300px; }

/* ─── Scrollbar ──────────────────────────────────── */
.scrollbar { width: 17px; height: 100%; background: #f0f0f0; display: flex; flex-direction: column; align-items: center; }
.sb-arrow { flex: none; margin-top: 15px; }
.sb-thumb { width: 15px; height: 387px; margin-top: 8px; background: #cdcdcd; flex: none; }
.sb-arrow.down { margin-top: auto; margin-bottom: 16px; }
</style>
